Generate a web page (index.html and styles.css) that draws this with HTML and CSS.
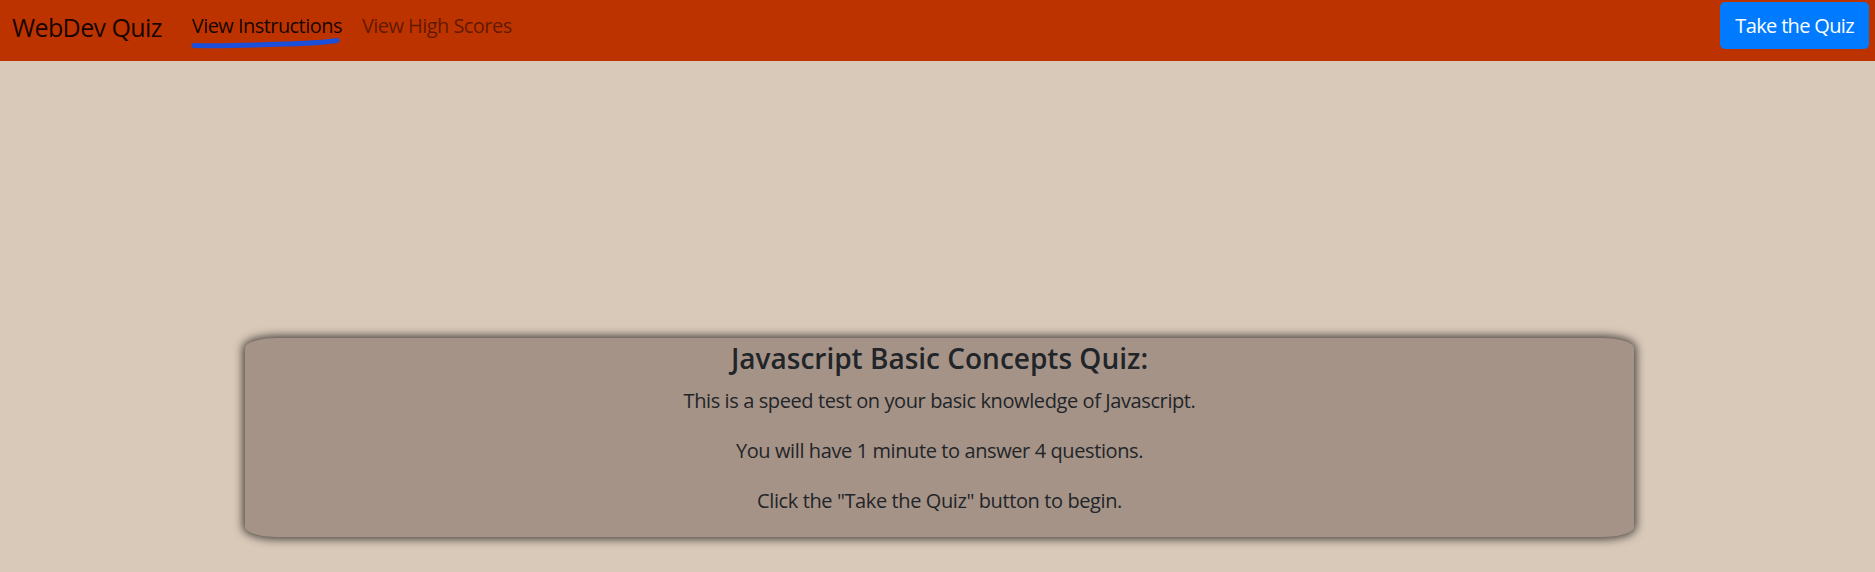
FILE: index.html
```html
<!DOCTYPE html>
<html lang="en">
<head>
<meta charset="utf-8">
<title>WebDev Quiz</title>
<link rel="stylesheet" href="styles.css">
</head>
<body>
<nav class="navbar">
  <a class="brand" href="#">WebDev Quiz</a>
  <ul class="nav-links">
    <li><a class="nav-link active" href="#">View Instructions<svg class="scribble" width="150" height="14" viewBox="0 0 150 14"><path d="M3 9.5 C 30 10.5, 70 9, 98 8 S 138 6, 146 4.5" fill="none" stroke="#1c4fd9" stroke-width="5" stroke-linecap="round"/></svg></a></li>
    <li><a class="nav-link" href="#">View High Scores</a></li>
  </ul>
  <button class="btn-start" type="button">Take the Quiz</button>
</nav>
<main class="main">
  <section class="card">
    <h3 class="card-title">Javascript Basic Concepts Quiz:</h3>
    <p class="card-text">This is a speed test on your basic knowledge of Javascript.</p>
    <p class="card-text">You will have 1 minute to answer 4 questions.</p>
    <p class="card-text">Click the "Take the Quiz" button to begin.</p>
  </section>
</main>
</body>
</html>
```
FILE: styles.css
```css
* { box-sizing: border-box; }
html, body {
  margin: 0;
  padding: 0;
}
body {
  background: #d9c9b9;
  font-family: "Open Sans", "Noto Sans", sans-serif;
  color: #212529;
  height: 572px;
  overflow: hidden;
}
.navbar {
  display: flex;
  align-items: flex-start;
  height: 61px;
  background: #bd3300;
  padding: 0 6px 0 12px;
}
.brand {
  font-size: 25px;
  line-height: 30px;
  letter-spacing: -0.6px;
  margin-top: 12px;
  color: rgba(0, 0, 0, 0.9);
  text-decoration: none;
}
.nav-links {
  display: flex;
  list-style: none;
  margin: 11px 0 0 20px;
  padding: 0;
}
.nav-link {
  position: relative;
  display: block;
  font-size: 20px;
  line-height: 30px;
  letter-spacing: -0.55px;
  padding: 0 10px;
  color: rgba(0, 0, 0, 0.5);
  text-decoration: none;
}
.nav-link.active { color: rgba(0, 0, 0, 0.9); }
.scribble {
  position: absolute;
  left: 9px;
  top: 25px;
}
.btn-start {
  margin: 2px 0 0 auto;
  height: 47px;
  padding: 0 15px;
  border: none;
  border-radius: 5px;
  background: #007bff;
  color: #fff;
  font-family: inherit;
  font-size: 20px;
  line-height: 47px;
  letter-spacing: -0.65px;
}
.main {
  padding-top: 277px;
}
.card {
  width: 1389px;
  margin: 0 0 0 245px;
  background: #a69387;
  border-radius: 32px / 10px;
  box-shadow: 0 0 10px 2px rgba(0, 0, 0, 0.7);
  padding: 4px 20px 1px;
  text-align: center;
}
.card-title {
  margin: 0 0 10px;
  font-size: 28px;
  line-height: 33.6px;
  font-weight: 600;
}
.card-text {
  margin: 0 0 20px;
  font-size: 20px;
  line-height: 30px;
  letter-spacing: -0.4px;
}
```
